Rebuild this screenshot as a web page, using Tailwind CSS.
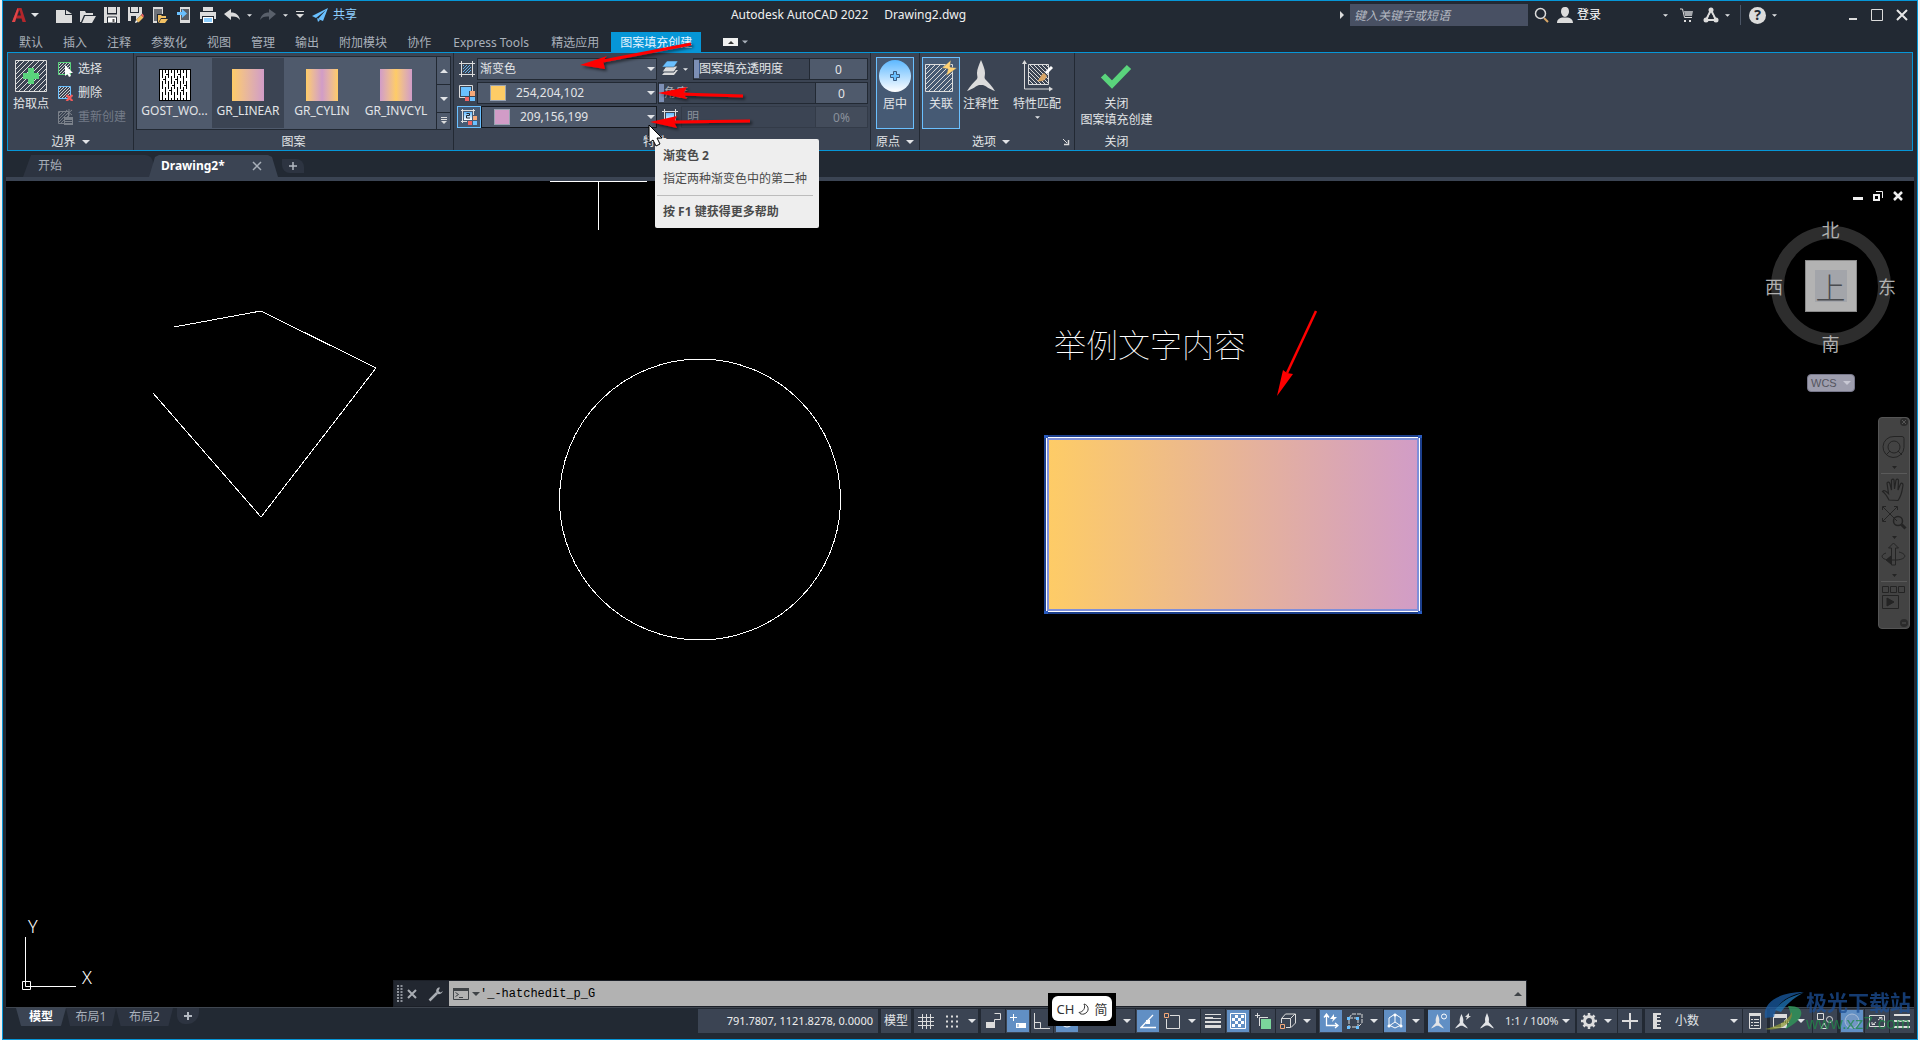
<!DOCTYPE html>
<html lang="zh-CN">
<head>
<meta charset="utf-8">
<title>Autodesk AutoCAD 2022 - Drawing2.dwg</title>
<script src="https://cdn.jsdelivr.net/npm/@tailwindcss/browser@4"></script>
</head>
<body class="relative overflow-hidden bg-[#f0f0f0] px-0.5 text-xs leading-4 text-[#e2e4e7] [font-family:'Noto_Sans','Noto_Sans_CJK_SC',sans-serif]">

<!-- shared icon definitions -->
<svg class="absolute h-0 w-0" aria-hidden="true">
  <defs>
    <symbol id="caret" viewBox="0 0 8 4"><path d="M0 0h8L4 4z" fill="currentColor"/></symbol>
    <symbol id="annot" viewBox="0 0 28 32"><path d="M14 0c2 5 4 9 4 13c0 3-1 4 0 6c3 3 7 7 10 12c-6-2-9-5-12-6h-4c-3 1-6 4-12 6c3-5 7-9 10-12c1-2 0-3 0-6c0-4 2-8 4-13z" fill="currentColor"/></symbol>
    <pattern id="hatch" width="5" height="5" patternUnits="userSpaceOnUse"><path d="M-1 6L6-1M-1 1L1-1M4 6L6 4" stroke="#dcdcdc" stroke-width="1"/></pattern>
    <pattern id="hatch-s" width="3" height="3" patternUnits="userSpaceOnUse"><path d="M-1 4L4-1M-1 1L1-1M2 4L4 2" stroke="#dcdcdc" stroke-width=".9"/></pattern>
    <pattern id="hatch-b" width="3" height="3" patternUnits="userSpaceOnUse"><path d="M-1 4L4-1M-1 1L1-1M2 4L4 2" stroke="#6ac0ff" stroke-width=".9"/></pattern>
    <pattern id="hatch-r" width="4" height="4" patternUnits="userSpaceOnUse"><path d="M-1-1L5 5M-1 3L1 5M3-1L5 1" stroke="#dcdcdc" stroke-width="1"/></pattern>
    <linearGradient id="sky" x2="0" y2="1"><stop offset="0" stop-color="#5db8ff"/><stop offset="1" stop-color="#fff"/></linearGradient>
    <filter id="soft" x="-20%" y="-80%" width="140%" height="260%"><feDropShadow dx="2" dy="2" stdDeviation="1.500" flood-opacity=".6"/></filter>
  </defs>
</svg>

<div class="flex h-screen flex-col border border-[#0696d7] bg-[#222933]">

  <!-- title bar -->
  <header class="relative flex h-7 shrink-0 items-center">
    <button class="ml-2 flex items-center gap-1" aria-label="应用程序菜单">
      <svg class="h-4 w-4" viewBox="0 0 16 16"><path d="M1 15L6.500 1h4L15 15h-3.500l-1-3.500H5L4 15z" fill="#b3262b"/><path d="M6.300 8.500L8.500 3l1.500 5.500z" fill="#222933"/><path d="M1 15L6.500 1l1 2L4 15z" fill="#e0474a"/></svg>
      <svg class="h-1 w-2"><use href="#caret"/></svg>
    </button>
    <div class="ml-[17px] flex items-center gap-2">
      <button aria-label="新建"><svg class="mt-1 h-4 w-4" viewBox="0 0 16 16"><path d="M0 1h9v5h7v8H0zM10 1l6 4h-6z" fill="#dcdcdc"/></svg></button>
      <button aria-label="打开"><svg class="mt-1 h-4 w-4" viewBox="0 0 16 16"><path d="M0 2h5l1 2h7v2H4L1 13H0zM5 7h11l-4 7H2z" fill="#dcdcdc"/></svg></button>
      <button aria-label="保存"><svg class="h-4 w-4" viewBox="0 0 16 16"><path d="M0 0h3v7h10V0h3v16H0zM4 0h8v6H4z" fill="#dcdcdc"/><path d="M3 7h10" stroke="#222933"/><path d="M3.500 10h9v6h-9z" fill="#fff" stroke="#222933"/><path d="M8.500 12h2v3h-2z" fill="#555"/></svg></button>
      <button aria-label="另存为"><svg class="h-4 w-4" viewBox="0 0 16 16"><path d="M0 0h2v6h9V0h3v7l-7 7H0zM3 0h7v5H3z" fill="#dcdcdc"/><path d="M3 9h5v5H3z" fill="#222933"/><path d="M8 13l5-5 2.500 2.500-5 5z" fill="#f2c063"/><path d="M13 8l1.500-1.500L16 9l-1 1.500z" fill="#f06464"/><path d="M7 16l1-3 2 2z" fill="#fff"/></svg></button>
      <button aria-label="从移动端打开"><svg class="h-4 w-4" viewBox="0 0 16 16"><path d="M1 0h10v7H5v9H1z" fill="#dcdcdc"/><path d="M2 2h8v5H5v7H2z" fill="#6d7178"/><path d="M6 8h3l1 1h4v2h-5l-3 5zM9 12h7l-3 4H7z" fill="#f2c063"/></svg></button>
      <button aria-label="保存到移动端"><svg class="h-4 w-4" viewBox="0 0 16 16"><path d="M4 0h10v16H4z" fill="#dcdcdc"/><path d="M5 2h8v11H5z" fill="#5a5f68"/><path d="M1 5h5V2l5 4.500L6 11V8H1z" fill="#6ac0ff"/></svg></button>
      <button aria-label="打印"><svg class="h-4 w-4" viewBox="0 0 16 16"><path d="M3 0h10v4H3zM0 5h16v7h-2V9H2v3H0z" fill="#dcdcdc"/><path d="M3 10h10v6H3z" fill="#fff"/><path d="M4 11h8v4H4z" fill="#8ecfff"/></svg></button>
      <button aria-label="放弃"><svg class="h-4 w-4" viewBox="0 0 16 16"><path d="M0 7l7-5v3.500c5 0 8 2.500 9 7.500-2-3-5-4-9-3.500V13z" fill="#dcdcdc"/></svg></button>
    </div>
    <svg class="ml-[7px] h-[3px] w-[5px]"><use href="#caret"/></svg>
    <button class="ml-2" aria-label="重做"><svg class="h-4 w-4" viewBox="0 0 16 16"><path d="M16 7L9 2v3.500C4 5.500 1 8 0 13c2-3 5-4 9-3.500V13z" fill="#59606b"/></svg></button>
    <svg class="ml-[7px] h-[3px] w-[5px]"><use href="#caret"/></svg>
    <svg class="ml-2 h-2 w-2" viewBox="0 0 8 8"><path d="M0 .5h8" stroke="#dcdcdc"/><path d="M0 3h8L4 7z" fill="#dcdcdc"/></svg>
    <button class="ml-2 flex items-center gap-[5px] text-[#8ecfff]"><svg class="h-4 w-4" viewBox="0 0 16 16"><path d="M16 1L0 9l4 2L14 3 6 12l5 2z" fill="#6ac0ff"/><path d="M5 11l1 4 2-2z" fill="#6ac0ff"/></svg>共享</button>

    <div class="pointer-events-none absolute inset-x-0 flex justify-center gap-4 pr-[223px] text-xs text-[#f0f0f0]"><span>Autodesk AutoCAD 2022</span><span>Drawing2.dwg</span></div>

    <div class="ml-auto flex items-center">
      <svg class="h-2 w-1" viewBox="0 0 4 8"><path d="M0 0l4 4-4 4z" fill="#dcdcdc"/></svg>
      <input class="ml-1.5 h-[22px] w-[178px] bg-[#485063] px-1 text-xs italic placeholder:text-[#b4b9c2]" aria-label="搜索" placeholder="键入关键字或短语">
      <button class="ml-1.5" aria-label="搜索"><svg class="h-4 w-4" viewBox="0 0 16 16" fill="none"><path d="M10 11l4 4" stroke="#d8a667" stroke-width="2"/><circle cx="6.500" cy="6.500" r="5" stroke="#dcdcdc" stroke-width="1.500"/></svg></button>
      <button class="ml-[7px] flex items-center gap-1 text-white"><svg class="h-4 w-4" viewBox="0 0 16 16"><path d="M8 0c3 0 4 2 4 4.500S10 10 8 10 4 7 4 4.500 5 0 8 0zM0 16c0-4 3-5 5-5.500h6c2 .5 5 1.500 5 5.500z" fill="#dcdcdc"/></svg>登录</button>
      <svg class="ml-[62px] h-[3px] w-[5px]"><use href="#caret"/></svg>
      <button class="ml-[11px]" aria-label="Autodesk App Store"><svg class="h-4 w-4" viewBox="0 0 16 16"><path d="M1 2h2.500l2 8.500H13" stroke="#dcdcdc" fill="none"/><path d="M5 4h9l-1 5H6z" fill="#a5a8ad"/><path d="M5 13h2v2H5zM10 13h2v2h-2z" fill="#dcdcdc"/></svg></button>
      <button class="ml-2" aria-label="连接"><svg class="h-4 w-4" viewBox="0 0 16 16" fill="none"><path d="M8 3L3 13h10z" stroke="#dcdcdc" stroke-width="2"/><circle cx="8" cy="3" r="2.500" fill="#dcdcdc"/><circle cx="3" cy="13" r="2.500" fill="#dcdcdc"/><circle cx="13" cy="13" r="2.500" fill="#dcdcdc"/><path d="M8 8v3" stroke="#222933" stroke-width="3"/></svg></button>
      <svg class="ml-1.5 h-[3px] w-[5px]"><use href="#caret"/></svg>
      <span class="ml-2.5 h-5 w-px bg-[#4b5565]"></span>
      <button class="ml-2 flex h-[17px] w-[17px] items-center justify-center rounded-full bg-[#dcdcdc] text-sm font-bold text-[#222933]" aria-label="帮助">?</button>
      <svg class="ml-1.5 h-[3px] w-[5px]"><use href="#caret"/></svg>
      <button class="ml-[70px]" aria-label="最小化"><svg class="h-3 w-3" viewBox="0 0 12 12"><path d="M2 9h8v2H2z" fill="#dcdcdc"/></svg></button>
      <button class="ml-3" aria-label="最大化"><svg class="h-3 w-3" viewBox="0 0 12 12"><path d="M.5.5h11v11H.5z" stroke="#dcdcdc" fill="none"/></svg></button>
      <button class="ml-[13px] mr-[9px]" aria-label="关闭"><svg class="h-3 w-3" viewBox="0 0 12 12"><path d="M1 1l10 10M11 1L1 11" stroke="#e6e6e6" stroke-width="2"/></svg></button>
    </div>
  </header>

  <!-- ribbon tabs -->
  <nav class="flex h-[23px] shrink-0 items-end pl-1.5 text-[#a9b0ba]">
    <button class="h-5 px-2.5 pt-0.5">默认</button><button class="h-5 px-2.5 pt-0.5">插入</button><button class="h-5 px-2.5 pt-0.5">注释</button><button class="h-5 px-2.5 pt-0.5">参数化</button><button class="h-5 px-2.5 pt-0.5">视图</button><button class="h-5 px-2.5 pt-0.5">管理</button><button class="h-5 px-2.5 pt-0.5">输出</button><button class="h-5 px-2.5 pt-0.5">附加模块</button><button class="h-5 px-2.5 pt-0.5">协作</button><button class="h-5 w-[100px] pt-0.5">Express Tools</button><button class="h-5 px-2.5 pt-0.5">精选应用</button><button class="ml-0.5 h-5 w-[90px] bg-[#0696d7] pt-0.5 text-[#e6f4ff]">图案填充创建</button>
    <button class="mb-1.5 ml-[22px] flex h-2 w-[15px] items-center justify-center bg-[#f0f0f0] text-[#333]" aria-label="最小化功能区"><svg class="h-[3px] w-[6px] rotate-180"><use href="#caret"/></svg></button>
    <svg class="mb-2 ml-1 h-1 w-1.5"><use href="#caret"/></svg>
  </nav>

  <!-- ribbon -->
  <section class="mx-1 flex h-[99px] shrink-0 border border-[#0696d7] bg-[#3b4453]">
    <div class="flex w-[126px] flex-col border-r border-[#222933]">
      <div class="flex flex-1 items-start pt-1">
        <button class="flex w-[46px] flex-col items-center pt-[3px]">
          <svg class="h-8 w-8" viewBox="0 0 32 32"><path d="M.5.500h31v31H.5z" fill="url(#hatch)" stroke="#dcdcdc"/><path d="M13 8h6v5h5v6h-5v5h-6v-5H8v-6h5z" fill="#5ad47c"/></svg>
          <span class="mt-1 whitespace-nowrap">拾取点</span>
        </button>
        <div class="ml-[3px] flex flex-col">
          <button class="flex h-6 items-center gap-[5px]"><svg class="h-4 w-4" viewBox="0 0 16 16"><path d="M1.500 1.500h12v12h-12z" fill="url(#hatch-s)" stroke="#5ad47c"/><path d="M8 4v11l2.500-2 1.500 3 2-1-1.500-3H16z" fill="#fff"/></svg>选择</button>
          <button class="flex h-6 items-center gap-[5px]"><svg class="h-4 w-4" viewBox="0 0 16 16"><path d="M1.500 1.500h12v12h-12z" fill="url(#hatch-s)" stroke="#6ac0ff"/><path d="M9.500 10l6 6M15.500 10l-6 6" stroke="#f05a5a" stroke-width="2.200"/></svg>删除</button>
          <button class="flex h-6 items-center gap-[5px] text-[#737b88]" disabled><svg class="h-4 w-4 opacity-40" viewBox="0 0 16 16"><path d="M1.500 2.500h10v12h-10z" fill="url(#hatch-s)" stroke="#dcdcdc"/><path d="M12 0v7M9 1l6 5M15 1L9 6" stroke="#dcdcdc"/><path d="M7 8h9v8H7z" fill="#dcdcdc"/><path d="M8 11.500h7M8 13.500h7" stroke="#3b4453"/></svg>重新创建</button>
        </div>
      </div>
      <button class="flex h-[17px] items-center justify-center gap-1.5">边界<svg class="h-1 w-2"><use href="#caret"/></svg></button>
    </div>

    <div class="flex w-80 flex-col border-r border-[#222933]">
      <div class="flex flex-1 px-0.5 pt-[3px]">
        <div class="flex h-[74px] w-full border border-[#222933] bg-[#4f5a6c]">
          <button class="flex w-[75px] flex-col items-center pt-3"><svg class="h-8 w-8" viewBox="0 0 32 32" shape-rendering="crispEdges"><rect width="32" height="32" fill="#fff"/><path d="M3.500 1v8M3.500 12v8M3.500 23v8M9.500 1v8M9.500 12v8M9.500 23v8M15.500 1v8M15.500 12v8M15.500 23v8M21.500 1v8M21.500 12v8M21.500 23v8M27.500 1v8M27.500 12v8M27.500 23v8M6.500 1v3M6.500 7v8M6.500 18v8M6.500 29v3M12.500 1v3M12.500 7v8M12.500 18v8M12.500 29v3M18.500 1v3M18.500 7v8M18.500 18v8M18.500 29v3M24.500 1v3M24.500 7v8M24.500 18v8M24.500 29v3M4 10.500h2M10 21.500h2M16 10.500h2M22 21.500h2M7 5.500h2M13 16.500h2M19 5.500h2M25 16.500h2" stroke="#000"/><path d="M.5.500h31v31H.5z" fill="none" stroke="#000"/></svg><span class="mt-0.5">GOST_WO...</span></button>
          <button class="my-px flex w-[72px] flex-col items-center bg-[#3b4453] pt-[11px]"><span class="h-8 w-8 bg-linear-to-r from-[#fecc66] to-[#d19cc7]"></span><span class="mt-0.5">GR_LINEAR</span></button>
          <button class="flex w-[76px] flex-col items-center pt-3"><span class="h-8 w-8 bg-linear-to-r from-[#fecc66] via-[#d19cc7] to-[#fecc66]"></span><span class="mt-0.5">GR_CYLIN</span></button>
          <button class="flex w-[72px] flex-col items-center pt-3"><span class="h-8 w-8 bg-linear-to-r from-[#d19cc7] via-[#fecc66] to-[#d19cc7]"></span><span class="mt-0.5">GR_INVCYL</span></button>
          <div class="ml-auto flex w-[14px] flex-col border-l border-[#222933]">
            <button class="flex flex-1 items-center justify-center" aria-label="上一行"><svg class="h-1 w-2 rotate-180"><use href="#caret"/></svg></button>
            <button class="flex flex-1 items-center justify-center border-y border-[#222933]" aria-label="下一行"><svg class="h-1 w-2"><use href="#caret"/></svg></button>
            <button class="flex h-4 items-center justify-center" aria-label="展开"><svg class="h-2 w-2" viewBox="0 0 8 8"><path d="M1 .5h6M1 2.500h6" stroke="#dcdcdc"/><path d="M1 4h6L4 7z" fill="#dcdcdc"/></svg></button>
          </div>
        </div>
      </div>
      <div class="flex h-[17px] items-center justify-center">图案</div>
    </div>

    <div class="flex w-[417px] flex-col border-r border-[#222933]">
      <div class="flex flex-1 flex-col pr-0.5 pt-1">
        <div class="flex h-6 items-center">
          <svg class="ml-[5px] mr-0.5 h-4 w-4" viewBox="0 0 16 16"><path d="M0 2.500h16M0 13.500h16M2.500 0v16M13.500 0v16" stroke="#dcdcdc"/><path d="M4 4h8v8H4z" fill="url(#hatch-b)"/></svg>
          <div class="flex h-[22px] w-[180px] items-center border border-[#222933] bg-[#4f5a6c] pl-0.5 pr-px"><select class="flex-1 appearance-none bg-transparent" aria-label="图案填充类型"><option>渐变色</option></select><svg class="h-1 w-2"><use href="#caret"/></svg></div>
          <svg class="ml-[5px] h-4 w-4" viewBox="0 0 16 16"><path d="M4 9h12l-4 5H0z" fill="#dcdcdc"/><path d="M4 5h12l-4 6H0z" fill="#dcdcdc" stroke="#3b4453"/><path d="M5 0h11l-4 6H0z" fill="#6ac0ff" stroke="#3b4453" stroke-width=".5"/></svg>
          <svg class="ml-[5px] h-[3px] w-[5px]"><use href="#caret"/></svg>
          <label class="relative ml-[5px] flex h-[22px] flex-1 items-center border border-[#222933] pl-[5px]"><input type="range" value="0" class="absolute inset-0 h-full w-full appearance-none bg-transparent [&::-webkit-slider-thumb]:h-[18px] [&::-webkit-slider-thumb]:w-[5px] [&::-webkit-slider-thumb]:appearance-none [&::-webkit-slider-thumb]:bg-[#7d8fb5]"><span class="relative">图案填充透明度</span></label>
          <input class="h-[22px] w-[58px] border border-l-0 border-[#222933] bg-[#4f5a6c] text-center" aria-label="透明度值" value="0">
        </div>
        <div class="flex h-6 items-center">
          <svg class="ml-[5px] mr-0.5 h-4 w-4" viewBox="0 0 16 16"><path d="M.5.500h13v12H.5z" fill="none" stroke="#dcdcdc"/><path d="M2 2h10v9H2z" fill="#6ac0ff"/><path d="M11 6h5v5h-5z" fill="#f5a878"/><path d="M6 11h5v5H6z" fill="#f06464"/><path d="M11 11h5v5h-5z" fill="#6ac0ff"/><path d="M10.500 6v10M6 11.500h10" stroke="#3b4453"/></svg>
          <div class="flex h-[22px] w-[180px] items-center border border-[#222933] bg-[#4f5a6c] pl-3 pr-px"><span class="h-4 w-4 border border-[#9aa3b1] bg-[#fecc66]"></span><select class="ml-2.5 flex-1 appearance-none bg-transparent" aria-label="渐变色 1"><option>254,204,102</option></select><svg class="h-1 w-2"><use href="#caret"/></svg></div>
          <label class="relative ml-px flex h-[22px] flex-1 items-center border border-[#222933] pl-[5px]"><input type="range" value="0" class="absolute inset-0 h-full w-full appearance-none bg-transparent [&::-webkit-slider-thumb]:h-[18px] [&::-webkit-slider-thumb]:w-[5px] [&::-webkit-slider-thumb]:appearance-none [&::-webkit-slider-thumb]:bg-[#7d8fb5]"><span class="relative text-[#aab0b9]">角度</span></label>
          <input class="h-[22px] w-[52px] border border-l-0 border-[#222933] bg-[#4f5a6c] text-center" aria-label="角度值" value="0">
        </div>
        <div class="flex h-6 items-center">
          <button class="ml-[3px] flex h-[22px] w-6 items-center justify-center border border-[#6ac0ff] bg-[#465a74]" aria-label="渐变色 2 开关"><svg class="h-4 w-4" viewBox="0 0 16 16"><path d="M0 1.500h14M0 12.500h6M1.500 0v14M12.500 0v6" stroke="#dcdcdc"/><path d="M3 3h8v8H3z" fill="url(#sky)"/><path d="M5.500 4.500h3v2h-3v2.500h3.500" stroke="#222933" fill="none"/><path d="M12 7h4v4h-4z" fill="#f5a878"/><path d="M7 12h4v4H7z" fill="#f06464"/><path d="M12 12h4v4h-4z" fill="#6ac0ff"/></svg></button>
          <div class="flex h-[22px] w-[176px] items-center border border-[#14181e] bg-[#4f5a6c] pl-3 pr-px"><span class="h-4 w-4 border border-[#9aa3b1] bg-[#d19cc7]"></span><select class="ml-2.5 flex-1 appearance-none bg-transparent" aria-label="渐变色 2"><option>209,156,199</option></select><svg class="h-1 w-2"><use href="#caret"/></svg></div>
          <svg class="ml-[5px] h-4 w-4" viewBox="0 0 16 16"><path d="M0 2.500h16M2.500 0v14M13.500 0v14" stroke="#dcdcdc"/><path d="M4 4h8v8H4z" fill="url(#sky)"/></svg>
          <label class="ml-[3px] flex h-[22px] flex-1 items-center border border-[#333b48] pl-[5px] text-[#8a919c]">明</label>
          <input class="h-[22px] w-[52px] border border-l-0 border-[#333b48] bg-[#434c5b] text-center text-[#8a919c]" aria-label="明暗" value="0%" disabled>
        </div>
      </div>
      <button class="flex h-[17px] items-center justify-center gap-1.5">特性<svg class="h-1 w-2"><use href="#caret"/></svg></button>
    </div>

    <div class="flex w-[49px] flex-col items-center border-r border-[#222933]">
      <div class="flex-1 pt-1"><button class="flex h-[72px] w-[38px] flex-col items-center border border-[#6ac0ff] bg-[#465a74] pt-0.5"><svg class="h-8 w-8" viewBox="0 0 32 32"><circle cx="16" cy="16" r="16" fill="url(#sky)"/><path d="M14.500 11.500h3v3h3v3h-3v3h-3v-3h-3v-3h3z" fill="#6ac0ff" stroke="#3a5a80"/></svg><span class="mt-1">居中</span></button></div>
      <button class="flex h-[17px] items-center gap-1.5">原点<svg class="h-1 w-2"><use href="#caret"/></svg></button>
    </div>

    <div class="flex w-[155px] flex-col border-r border-[#222933]">
      <div class="flex flex-1 items-start pl-0.5 pt-1">
        <button class="flex h-[72px] w-[38px] flex-col items-center border border-[#6ac0ff] bg-[#465a74] pt-0.5"><svg class="h-8 w-8" viewBox="0 0 32 32"><path d="M.5 4.500h27v27H.5z" fill="url(#hatch)" stroke="#dcdcdc"/><path d="M26 0l-9 8 6 1-2 7 11-8-7-1z" fill="#ffd173" stroke="#465a74" stroke-width=".5"/></svg><span class="mt-1">关联</span></button>
        <button class="ml-0.5 flex w-[38px] flex-col items-center pt-[3px]"><svg class="h-8 w-7 text-[#dcdcdc]"><use href="#annot"/></svg><span class="mt-1">注释性</span></button>
        <button class="ml-3 flex w-[50px] flex-col items-center pt-[3px]"><svg class="h-8 w-8" viewBox="0 0 32 32"><path d="M3.500 2v27H30" stroke="#dcdcdc" fill="none"/><path d="M1 4l2.500-4L6 4zM28 26.500l4 2.500-4 2.500z" fill="#dcdcdc"/><path d="M7.500 4.500h20v20h-20z" fill="url(#hatch-r)" stroke="#dcdcdc"/><path d="M16 21c3-1 3-6 7-8l3 3c-2 5-6 6-10 5z" fill="#d8a667"/><path d="M25 13l6-6" stroke="#fff" stroke-width="3"/></svg><span class="mt-1">特性匹配</span><svg class="mt-1 h-[3px] w-[5px]"><use href="#caret"/></svg></button>
      </div>
      <div class="relative flex h-[17px] items-center justify-center pr-3"><button class="flex items-center gap-1.5">选项<svg class="h-1 w-2"><use href="#caret"/></svg></button><svg class="absolute right-1 h-2 w-2" viewBox="0 0 8 8"><path d="M1 1l4 4" stroke="#dcdcdc"/><path d="M2 6.500h4.500V2" stroke="#dcdcdc" fill="none" stroke-width="1.500"/></svg></div>
    </div>

    <div class="flex w-[83px] flex-col items-center">
      <button class="flex flex-1 flex-col items-center pt-[7px]"><svg class="h-8 w-8" viewBox="0 0 32 32"><path d="M3 15.500l9 9L29 7" stroke="#5ad47c" stroke-width="6" fill="none"/></svg><span class="mt-1">关闭</span><span>图案填充创建</span></button>
      <div class="flex h-[17px] items-center">关闭</div>
    </div>
  </section>

  <!-- drawing file tabs -->
  <nav class="flex h-[26px] shrink-0 items-end pl-5">
    <button class="flex h-[22px] w-[130px] items-center rounded-t-lg bg-[#2d3441] pl-[15px] text-[#a9b0ba] [clip-path:polygon(0_100%,8px_0,100%_0,100%_100%)]">开始</button>
    <div class="-ml-1 flex h-[22px] w-[129px] items-center justify-between bg-[#3b4453] pl-3 pr-4 font-bold text-white [clip-path:polygon(0_100%,6px_2px,10px_0,119px_0,123px_2px,100%_100%)]"><span>Drawing2*</span><button aria-label="关闭图形"><svg class="h-2.5 w-2.5" viewBox="0 0 10 10"><path d="M1 1l8 8M9 1L1 9" stroke="#a9b0ba" stroke-width="1.500"/></svg></button></div>
    <button class="mb-1 ml-1 flex h-[14px] w-[22px] items-center justify-center rounded-tr-lg rounded-bl-lg bg-[#2d3441]" aria-label="新图形"><svg class="h-2 w-2" viewBox="0 0 8 8"><path d="M4 0v8M0 4h8" stroke="#b4b9c2" stroke-width="1.500"/></svg></button>
  </nav>
  <div class="mx-[3px] h-1 shrink-0 bg-[#3b4453]"></div>

  <!-- model space -->
  <main class="relative mx-[3px] min-h-0 flex-1 overflow-hidden bg-black">
    <svg class="absolute left-0 top-0 h-[650px] w-[1500px]" viewBox="6 181 1500 650" fill="none" stroke="#fff" shape-rendering="crispEdges">
      <defs><linearGradient id="fill12"><stop offset="0" stop-color="#fecc66"/><stop offset="1" stop-color="#d19cc7"/></linearGradient></defs>
      <path d="M550 181.500h97M598.500 181v49"/>
      <path d="M174 327l87-16 115 57-115 149-108-124"/>
      <circle cx="700" cy="499.500" r="140.500"/>
      <g stroke-width="2"><rect x="1047" y="438" width="373" height="173" fill="url(#fill12)" stroke="none"/><path d="M1045.500 436.500h375v176h-375z" stroke="#1c3f8c" stroke-width="3"/><path d="M1048 439h370v171h-370z" stroke="#7f8fd8"/><path d="M1046.500 437.500h373v174h-373z" stroke="#fff" stroke-width="1"/></g>
      <path d="M1044 435h4v3h-4zM1418 435h4v3h-4zM1044 611h4v3h-4zM1418 611h4v3h-4z" fill="#2a5cc0" stroke="none"/>
    </svg>
    <p class="absolute left-[1048px] top-[138px] text-[32px] leading-[48px] font-thin text-white [font-family:'Noto_Sans_CJK_SC',sans-serif]">举例文字内容</p>

    <div class="absolute right-[11px] top-[10px] flex items-center gap-2.5">
      <button aria-label="最小化视口"><svg class="h-2.5 w-2.5" viewBox="0 0 10 10"><path d="M0 6h10v3H0z" fill="#eee"/></svg></button>
      <button aria-label="还原视口"><svg class="h-2.5 w-2.5" viewBox="0 0 10 10" fill="none" stroke="#eee"><path d="M1 4h5v5H1z" stroke-width="2"/><path d="M3 .5h6.500V7"/></svg></button>
      <button aria-label="关闭视口"><svg class="h-2.5 w-2.5" viewBox="0 0 10 10"><path d="M1 1l8 8M9 1L1 9" stroke="#eee" stroke-width="2.500"/></svg></button>
    </div>

    <!-- view cube -->
    <div class="absolute right-[17px] top-[38px] grid h-[134px] w-[133px] grid-cols-[20px_1fr_20px] grid-rows-[20px_1fr_20px] place-items-center text-lg leading-5 text-[#b0b0b0] [font-family:'Noto_Sans_CJK_SC',sans-serif]">
      <span class="absolute left-[7px] top-[7px] h-[120px] w-[120px] rounded-full border-[13px] border-[#2d2d2d]"></span>
      <span class="relative col-start-2">北</span>
      <span class="relative col-start-1 row-start-2">西</span>
      <button class="relative col-start-2 row-start-2 flex h-[52px] w-[52px] items-center justify-center border border-[#8a8a8a] bg-[#b3b3b3]"><span class="flex h-8 w-8 items-center justify-center bg-[#a3a5aa] text-[30px] leading-8 font-light text-[#4a4c50]">上</span></button>
      <span class="relative col-start-3 row-start-2">东</span>
      <span class="relative col-start-2 row-start-3">南</span>
    </div>
    <button class="absolute right-[59px] top-[193px] flex h-[18px] w-12 items-center justify-between rounded border border-[#77778a] bg-[#9e9eae] px-[3px] text-[11px] text-[#55555f] [font-family:'Liberation_Sans',sans-serif]">WCS<svg class="h-1 w-2 text-[#c8c8d4]"><use href="#caret"/></svg></button>

    <!-- navigation bar -->
    <div class="absolute right-1 top-[236px] w-8 rounded border border-[#555] bg-[#434343]">
      <svg class="h-[210px] w-[30px]" viewBox="1 1 30 210" fill="none" stroke="#242424">
        <circle cx="26" cy="5" r="4" fill="#2b2b2b" stroke="none"/><path d="M24 3l4 4M28 3l-4 4" stroke="#555"/>
        <path d="M16 19.500h8q2 0 2 2v9a10.500 10.500 0 1 1-10-11z"/><circle cx="16" cy="30" r="6"/><path d="M12 34l-4 4M20 34l4 4"/>
        <path d="M3 56.500h26M3 164.500h26" stroke="#5a5a5a"/><path d="M14 49h5l-2.500 3zM14 119h5l-2.500 3zM14 157h5l-2.500 3z" fill="#242424" stroke="none"/>
        <path d="M11 83c-2-4-4-7-6.500-8.500 1.500-2 4 0 6 2L9 66c1-1.500 2.500-1 3 1l1.500 6V63c1-1.500 2.500-1 2.500 0l.5 9 1.500-9c1-1.500 2.500-1 2.500.5L20 73l2.500-6c1-1.500 2.500-.5 2.500 1-1 6-1 10-5 15.500z" stroke-width="1.200"/>
        <path d="M5 90l14 14M19 90L5 104M4.500 93v-3.500H8M16 89.500h3.500V93M4.500 101v3.500H8"/><circle cx="20" cy="104" r="4.500" stroke-width="1.500"/><path d="M23.500 107.500l4 4" stroke-width="3"/>
        <path d="M13.500 148v-17h-3l5-5 5 5h-3v17zM8 136c-6 2-5 6 2 7h9c10-1 10-6 2-8"/><path d="M8 143l5-4v8z" fill="#242424"/>
        <path d="M4.500 169.500h6v6h-6zM12.500 169.500h6v6h-6zM20.500 169.500h6v6h-6zM4.500 178.500h16v13h-16z"/><path d="M9 181v8l7-4z" fill="#242424"/>
        <circle cx="26" cy="206" r="4" fill="#2b2b2b" stroke="none"/><path d="M24 206h4" stroke="#555"/>
      </svg>
    </div>

    <!-- UCS icon -->
    <svg class="absolute bottom-4 left-4 h-[76px] w-20" viewBox="22 915 80 76" fill="none" stroke="#fff"><path d="M22.500 981.500h8v8h-8zM25.500 937v49.500H76"/><text x="28" y="933" fill="#fff" stroke="none" font-size="18" font-weight="300">Y</text><text x="82" y="984" fill="#fff" stroke="none" font-size="18" font-weight="300">X</text></svg>

    <!-- command line -->
    <div class="absolute inset-x-[387px] bottom-0 flex h-[27px] items-stretch border border-[#1b1f27] bg-[#222730]">
      <svg class="ml-[3px] mt-1 h-[17px] w-1.5" viewBox="0 0 6 17"><path d="M1 0v17M4.500 0v17" stroke="#8d929a" stroke-width="2" stroke-dasharray="2 1"/></svg>
      <button class="ml-1" aria-label="关闭命令行"><svg class="h-2.5 w-2.5" viewBox="0 0 10 10"><path d="M1 1l8 8M9 1L1 9" stroke="#a9adb3" stroke-width="2"/></svg></button>
      <button class="ml-[11px]" aria-label="自定义"><svg class="h-4 w-4" viewBox="0 0 16 16"><path d="M1.500 14.500L9 7" stroke="#a9adb3" stroke-width="2.500"/><path d="M12 1.500C9 1 7.500 4 8.500 6.500S13 9 15 5l-2.500 1.500L10.500 5z" fill="#a9adb3"/></svg></button>
      <label class="ml-[5px] flex flex-1 items-center bg-[#b2b2b2] px-1 text-[#3f4347]">
        <svg class="h-3 w-4" viewBox="0 0 16 12"><path d="M.5.500h15v11H.5z" fill="none" stroke="#3f4347"/><path d="M0 0h16v3H0z" fill="#3f4347"/><path d="M2.500 4.500l3 2-3 2M6 9.500h4" stroke="#3f4347" fill="none"/></svg>
        <svg class="ml-[3px] h-1 w-2"><use href="#caret"/></svg>
        <input class="flex-1 bg-transparent text-xs text-black [font-family:'Liberation_Mono',monospace]" aria-label="命令" value="'_-hatchedit_p_G">
        <svg class="h-1 w-2 rotate-180"><use href="#caret"/></svg>
      </label>
    </div>
  </main>

  <!-- layout tabs and status bar -->
  <footer class="mx-[3px] flex h-8 shrink-0 items-start border-t border-[#3f4650]">
    <div class="flex pl-2.5">
      <button class="h-[18px] w-[50px] rounded-b-md bg-[#3b4453] font-bold text-white [clip-path:polygon(0_0,100%_0,90%_100%,10%_100%)]">模型</button>
      <button class="h-[18px] w-[50px] bg-[#2d3441] text-[#a9b0ba] [clip-path:polygon(0_0,100%_0,92%_100%,8%_100%)]">布局1</button>
      <button class="h-[18px] w-[57px] bg-[#2d3441] text-[#a9b0ba] [clip-path:polygon(0_0,100%_0,92%_100%,8%_100%)]">布局2</button>
      <button class="ml-1 flex h-4 w-[22px] items-center justify-center rounded-br-xl rounded-bl-lg bg-[#2d3441]" aria-label="新布局"><svg class="h-2 w-2" viewBox="0 0 8 8"><path d="M4 0v8M0 4h8" stroke="#b4b9c2" stroke-width="2"/></svg></button>
    </div>

    <div class="ml-auto mt-px flex h-6 gap-px whitespace-nowrap text-xs">
      <output class="flex w-[180px] items-center justify-end bg-[#3b4453] pr-[5px] text-[11px] text-[#eee]">791.7807, 1121.8278, 0.0000</output>
      <button class="ml-0.5 w-[30px] bg-[#3b4453]">模型</button>
      <div class="ml-0.5 flex w-16 items-center bg-[#3b4453] pl-1"><svg class="h-4 w-4" viewBox="0 0 16 16"><path d="M0 4.500h16M0 8.500h16M0 12.500h16M4.500 1v15M8.500 1v15M12.500 1v15" stroke="#dcdcdc"/></svg><svg class="ml-2.5 h-4 w-4" viewBox="0 0 16 16"><path d="M2 3.500h13M2 8.500h13M2 13.500h13" stroke="#dcdcdc" stroke-width="2" stroke-dasharray="2 3"/></svg><svg class="ml-2 h-1 w-2"><use href="#caret"/></svg></div>
      <button class="ml-0.5 flex w-6 items-center justify-center bg-[#3b4453]" aria-label="推断约束"><svg class="h-4 w-4" viewBox="0 0 16 16"><path d="M9.500.500h6v6h-6v3" fill="none" stroke="#dcdcdc"/><path d="M1 9h9v6H1z" fill="#dcdcdc"/></svg></button>
      <button class="flex w-6 items-center justify-center border border-[#3b4453] bg-[#618fc4]" aria-label="动态输入"><svg class="h-4 w-4" viewBox="0 0 16 16"><path d="M3.500 1v7M0 4.500h7" stroke="#fff"/><path d="M6 10h10v5H6z" fill="#fff"/><path d="M8 11v3" stroke="#618fc4"/></svg></button>
      <button class="flex w-[22px] items-center justify-center bg-[#3b4453]" aria-label="正交"><svg class="h-4 w-4" viewBox="0 0 16 16"><path d="M.5 0v15.500H16M.5 9.500h6v6" fill="none" stroke="#dcdcdc"/></svg></button>
      <div class="flex w-[81px] items-center justify-between bg-[#3b4453] pl-0.5 pr-1"><span class="flex h-[22px] w-[22px] items-center justify-center bg-[#618fc4]"><svg class="h-4 w-4" viewBox="0 0 16 16"><circle cx="8" cy="8" r="6" fill="none" stroke="#fff"/></svg></span><svg class="h-1 w-2"><use href="#caret"/></svg></div>
      <div class="flex w-16 items-center bg-[#3b4453] pl-px"><span class="flex h-[22px] w-[22px] items-center justify-center bg-[#618fc4]"><svg class="h-4 w-4" viewBox="0 0 16 16"><path d="M16 14.500H1L13 2" fill="none" stroke="#fff" stroke-width="1.300"/><path d="M6 7h4v4H6z" fill="#fff"/></svg></span><svg class="ml-[5px] h-4 w-4" viewBox="0 0 16 16"><path d="M6 2.500h9.500v13H2.500V6" fill="none" stroke="#dcdcdc"/><path d="M.5.500h4v4h-4z" fill="none" stroke="#f5a878"/></svg><svg class="ml-2 h-1 w-2"><use href="#caret"/></svg></div>
      <button class="flex w-6 items-center justify-center bg-[#3b4453]" aria-label="线宽"><svg class="h-4 w-4" viewBox="0 0 16 16"><path d="M0 1.500h16" stroke="#dcdcdc"/><path d="M0 5h8M0 9h16" stroke="#dcdcdc" stroke-width="2"/><path d="M8 5.500h8" stroke="#dcdcdc"/><path d="M0 13.500h16" stroke="#dcdcdc" stroke-width="3"/></svg></button>
      <button class="flex w-6 items-center justify-center border border-[#3b4453] bg-[#618fc4]" aria-label="透明度"><svg class="h-4 w-4" viewBox="0 0 16 16"><path d="M.5.500h15v15H.5z" fill="none" stroke="#fff"/><path d="M5 2h3v3H5zM11 2h3v3h-3zM2 5h3v3H2zM8 5h3v3H8zM5 8h3v3H5zM11 8h3v3h-3zM2 11h3v3H2zM8 11h3v3H8z" fill="#fff"/></svg></button>
      <button class="flex w-6 items-center justify-center bg-[#3b4453]" aria-label="选择循环"><svg class="h-4 w-4" viewBox="0 0 16 16"><path d="M2.500 0v5M0 2.500h5M4.500 13V4.500H13" fill="none" stroke="#dcdcdc"/><path d="M6 6h10v10H6z" fill="#7bd79b"/></svg></button>
      <div class="flex w-10 items-center bg-[#3b4453] pl-1"><svg class="h-4 w-4" viewBox="0 0 16 16" fill="none" stroke="#dcdcdc"><path d="M1.500 10V5.500h9v9H6M1.500 5.500l4-4.500h10v9l-4.500 4.500M10.500 5.500L15 1"/><path d="M.5 11.500h4v4h-4z" stroke="#f5a878"/></svg><svg class="ml-[7px] h-1 w-2"><use href="#caret"/></svg></div>
      <div class="ml-0.5 flex w-16 items-center bg-[#3b4453] pl-px"><span class="flex h-[22px] w-[22px] items-center justify-center bg-[#618fc4]"><svg class="h-4 w-4" viewBox="0 0 16 16"><path d="M3.500 2v10.500H15M1 4.500L3.500 1 6 4.500M12 10l3 2.500-3 2.500" fill="none" stroke="#fff" stroke-width="1.300"/><path d="M11 1L7 6h3L9 9l5-5h-3z" fill="#fff"/></svg></span><svg class="ml-[5px] h-4 w-4" viewBox="0 0 16 16"><path d="M2 5h9v9H2zM2 5l3-4h10v9l-4 4" fill="none" stroke="#dcdcdc" stroke-dasharray="4 1"/><path d="M0 4h3v3H0zM9 4h3v3H9zM0 13h3v3H0zM9 13h3v3H9z" fill="#6ac0ff"/></svg><svg class="ml-[7px] h-1 w-2"><use href="#caret"/></svg></div>
      <div class="flex w-10 items-center bg-[#3b4453]"><span class="flex h-[22px] w-[22px] items-center justify-center bg-[#618fc4]"><svg class="h-4 w-4" viewBox="0 0 16 16"><path d="M8 1l6 4v7l-6 3-6-3V5zM8 2v7l-6 4M8 9l6 4" fill="none" stroke="#fff"/><circle cx="8" cy="2" r="1.500" fill="#fff"/><circle cx="2" cy="13" r="1.500" fill="#fff"/><circle cx="14" cy="13" r="1.500" fill="#fff"/></svg></span><svg class="ml-1.5 h-1 w-2"><use href="#caret"/></svg></div>
      <div class="ml-[3px] flex w-[147px] items-center bg-[#3b4453]"><span class="flex h-[22px] w-[22px] items-center justify-center bg-[#618fc4]"><svg class="h-4 w-4" viewBox="0 0 16 16"><use href="#annot" x="0" y="1" width="13" height="15"/><circle cx="13" cy="3.500" r="2.500" fill="none" stroke="#fff"/></svg></span><svg class="ml-[5px] h-4 w-4" viewBox="0 0 16 16"><use href="#annot" x="0" y="1" width="13" height="15"/><path d="M14 0l-4 4h2l-1 3 5-4h-2z" fill="#dcdcdc"/></svg><svg class="ml-2 h-4 w-4"><use href="#annot"/></svg><button class="ml-2.5 flex items-center gap-1 text-[11px]">1:1 / 100%<svg class="h-1 w-2"><use href="#caret"/></svg></button></div>
      <div class="ml-px flex w-10 items-center bg-[#3b4453] pl-1"><svg class="h-4 w-4" viewBox="0 0 16 16"><circle cx="8" cy="8" r="4.500" fill="none" stroke="#dcdcdc" stroke-width="3"/><path d="M8 0v3M8 13v3M0 8h3M13 8h3M2.500 2.500l2 2M11.500 11.500l2 2M13.500 2.500l-2 2M4.500 11.500l-2 2" stroke="#dcdcdc" stroke-width="2.500"/></svg><svg class="ml-[7px] h-1 w-2"><use href="#caret"/></svg></div>
      <button class="flex w-6 items-center justify-center bg-[#3b4453]" aria-label="注释监视器"><svg class="h-4 w-4" viewBox="0 0 16 16"><path d="M8 0v16M0 8h16" stroke="#dcdcdc" stroke-width="2"/></svg></button>
      <button class="ml-0.5 flex w-[97px] items-center bg-[#3b4453] pl-2 pr-1"><svg class="h-4 w-2" viewBox="0 0 8 16"><path d="M0 0h8v2H4v2h3v1H4v2h4v2H4v2h3v1H4v2h4v2H0z" fill="#dcdcdc"/></svg><span class="ml-3.5 mr-auto">小数</span><svg class="h-1 w-2"><use href="#caret"/></svg></button>
      <button class="flex w-6 items-center justify-center bg-[#3b4453]" aria-label="快捷特性"><svg class="h-4 w-3" viewBox="0 0 12 16"><path d="M.5.500h11v15H.5z" fill="none" stroke="#dcdcdc"/><path d="M0 0h12v3H0z" fill="#dcdcdc"/><path d="M2 6.500h2M2 9.500h2M2 12.500h2M5 6.500h5M5 9.500h5M5 12.500h5" stroke="#dcdcdc"/></svg></button>
      <div class="ml-0.5 flex w-[42px] items-center bg-[#3b4453] pl-[3px]"><svg class="h-4 w-4" viewBox="0 0 16 16"><path d="M.5 1.500h13v13H.5z" fill="none" stroke="#dcdcdc"/><path d="M0 1h14v4H0z" fill="#dcdcdc"/><path d="M8 10h6v5H8z" fill="#dcdcdc"/><path d="M11.500 10V8.500a2 2 0 0 1 4 0V10" fill="none" stroke="#dcdcdc"/></svg><svg class="ml-2 h-1 w-2"><use href="#caret"/></svg></div>
      <button class="flex w-6 items-center justify-center bg-[#3b4453]" aria-label="隔离对象"><svg class="h-4 w-4" viewBox="0 0 16 16" fill="none" stroke="#dcdcdc"><path d="M.5.500h6v6h-6zM7 10l3 5.500H4z"/><circle cx="12.500" cy="6.500" r="3"/></svg></button>
      <button class="ml-0.5 flex w-6 items-center justify-center border border-[#3b4453] bg-[#618fc4]" aria-label="图形性能"><svg class="h-4 w-4" viewBox="0 0 16 16"><circle cx="8" cy="8" r="7" fill="#7296c4" stroke="#a9bdd8"/></svg></button>
      <button class="flex w-6 items-center justify-center bg-[#3b4453]" aria-label="全屏显示"><svg class="h-4 w-4" viewBox="0 0 16 16" fill="none" stroke="#dcdcdc"><path d="M.5 2.500h15v11H.5zM9 7l4-3M10 4.500h3V7M7 9l-4 3M3 9v2.500h3"/></svg></button>
      <button class="flex w-6 items-center justify-center bg-[#3b4453]" aria-label="自定义"><svg class="h-4 w-4" viewBox="0 0 16 16"><path d="M0 2h16M0 8h16M0 14h16" stroke="#dcdcdc" stroke-width="2"/></svg></button>
    </div>
  </footer>
</div>

<!-- input method indicator -->
<div class="absolute bottom-[14px] left-[1048px] h-[33px] w-[68px] bg-black px-1 pt-[3px]"><div class="flex h-[25px] items-center justify-center gap-1 rounded-md bg-white text-[13px] text-[#333]">CH<svg class="h-3 w-3" viewBox="0 0 12 12"><path d="M6 1c5 1 6 8 0 10-2 .5-4 0-5-1.500C5 9 8 5 6 1z" fill="none" stroke="#333"/></svg>简</div></div>

<!-- property tooltip -->
<div class="absolute left-[655px] top-[139px] h-[89px] w-[164px] rounded-xs bg-[#eeeeee] px-0.5 pt-[9px] text-[#4a4a4a]">
  <p class="px-1.5 font-bold">渐变色 2</p>
  <p class="mt-[7px] px-1.5">指定两种渐变色中的第二种</p>
  <hr class="my-2 mr-1 border-[#bcbcbc]">
  <p class="px-1.5 font-bold">按 F1 键获得更多帮助</p>
</div>

<!-- callout arrows and pointer -->
<svg class="pointer-events-none absolute left-0 top-0 h-[400px] w-[1400px]" viewBox="0 0 1400 400" fill="red" stroke="red">
  <g filter="url(#soft)">
    <path d="M603 61l88-17" stroke-width="3"/><path d="M580 65l27-9-4 5 2 8z" stroke="none"/>
    <path d="M680 94l63 2" stroke-width="3"/><path d="M658 93l29-6-4 7 4 5z" stroke="none"/>
    <path d="M672 122l78-1" stroke-width="3"/><path d="M650 122l27-6-3 6 3 6z" stroke="none"/>
  </g>
  <path d="M1287 373l29-62" stroke-width="2.500"/><path d="M1277 396l6-26 4 3 6 1z" stroke="none"/>
  <path d="M649 125v18l4-3 3 6 4-2-3-6h5z" fill="#fff" stroke="#000"/>
</svg>

<!-- site watermark -->
<div class="pointer-events-none absolute bottom-1.5 right-2 flex items-center opacity-75">
  <svg class="h-11 w-11" viewBox="0 0 44 44"><path d="M3 28C0 12 18 2 42 2 24 6 14 14 12 27z" fill="#1a5ca4"/><path d="M13 20C20 10 30 6 41 3 30 9 24 15 19 22z" fill="#1f78bd"/><path d="M26 16c14-1 18 8 7 17-4 3-7 5-10 6 4-6 8-13 3-23z" fill="#2f9e5a"/><path d="M3 39c13-3 23-8 27-17 1 10-10 20-27 17z" fill="#8f9a3a"/></svg>
  <div class="w-[106px]"><p class="text-[21px] leading-6 font-bold text-[#1c4f96]">极光下载站</p><p class="text-[17px] leading-5 text-[#1f8a48] [font-family:'Liberation_Sans',sans-serif]">www.xz7.com</p></div>
</div>
</body>
</html>
